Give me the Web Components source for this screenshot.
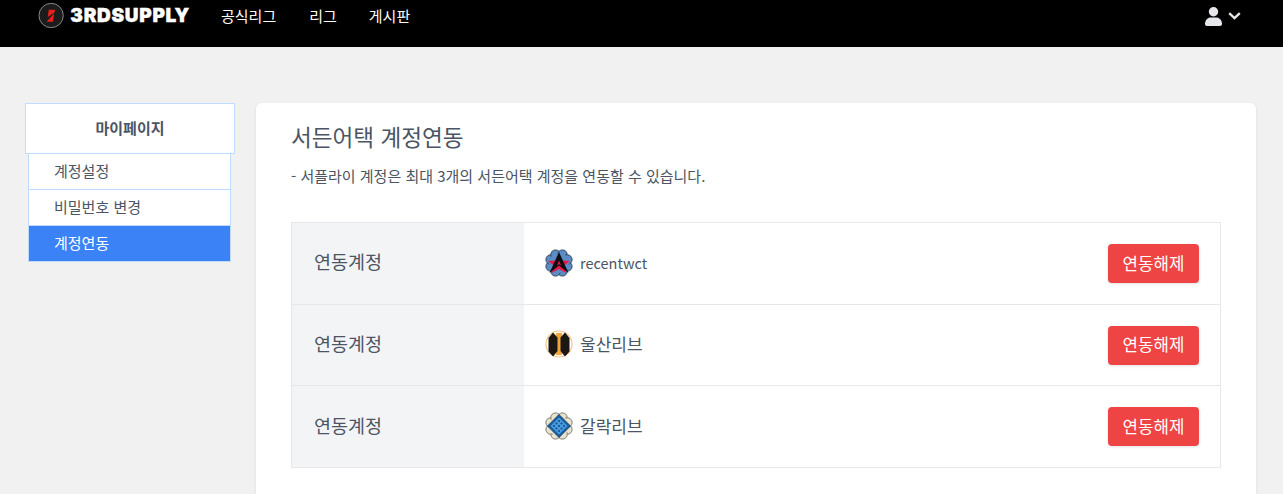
<!DOCTYPE html>
<html lang="ko"><head><meta charset="utf-8"><title>서든어택 계정연동</title>
<style>
html,body{margin:0;padding:0;height:494px;overflow:hidden;background:#f1f1f1;font-family:"Noto Sans CJK KR","Noto Sans",sans-serif;color:#4b5563}
</style></head><body>
<site-header></site-header>
<page-shell>
  <side-menu slot="side" heading="마이페이지">
    <menu-item>계정설정</menu-item>
    <menu-item>비밀번호 변경</menu-item>
    <menu-item active>계정연동</menu-item>
  </side-menu>
  <link-card heading="서든어택 계정연동" note="- 서플라이 계정은 최대 3개의 서든어택 계정을 연동할 수 있습니다.">
    <link-row name="recentwct" icon="a" latin></link-row>
    <link-row name="울산리브" icon="b"></link-row>
    <link-row name="갈락리브" icon="c"></link-row>
  </link-card>
</page-shell>
<script>
const KR='"Noto Sans CJK KR","Noto Sans",sans-serif';
function def(name,html,extra){
  customElements.define(name,class extends HTMLElement{
    constructor(){super();this.attachShadow({mode:'open'}).innerHTML=html;}
    connectedCallback(){extra&&extra.call(this,this.shadowRoot);}
  });
}
def('site-header',`<style>
:host{display:flex;height:47px;background:#000;box-sizing:border-box;padding:0 42px 0 38px;align-items:flex-start;color:#fff;font-family:${KR}}
.logo{display:flex;align-items:center;gap:6px;height:31px;width:152px}
.word{font:900 19px/31px Inter,sans-serif;letter-spacing:.7px;white-space:nowrap;-webkit-text-stroke:.4px #fff}
nav{display:flex;gap:33px;margin-left:31px;font-size:15px;line-height:31px;color:#fdfdf5}
nav span:last-child{margin-left:-1px}
.user{margin-left:auto;display:flex;align-items:center;gap:6px;height:31px}
.user svg:first-child{margin-top:2px}
</style>
<div class="logo"><svg width="27" height="27" viewBox="0 0 27 27"><circle cx="13.500" cy="13.500" r="12.500" fill="#1c1c1c" stroke="#8a8a8a" stroke-width="1"/><path d="M11 7.500h6.500l-.5 3-7 4.500zM16.500 11.500l-1 8.500H8.800z" fill="#e8201c"/></svg><span class="word">3RDSUPPLY</span></div>
<nav><span>공식리그</span><span>리그</span><span>게시판</span></nav>
<div class="user"><svg width="17" height="19" viewBox="0 0 17 19"><circle cx="8.500" cy="4.800" r="4.700" fill="#e5e7eb"/><path d="M0 17c0-4.400 3-6.600 5.500-6.600h6C14 10.400 17 12.600 17 17c0 1.200-.8 2-2 2H2c-1.200 0-2-.8-2-2z" fill="#e5e7eb"/></svg><svg width="13" height="8" viewBox="0 0 13 8"><path d="M1.200 1.200l5.300 5 5.300-5" fill="none" stroke="#e5e7eb" stroke-width="2.300"/></svg></div>`);
def('page-shell',`<style>
:host{display:flex;gap:21px;padding:56px 27px 0 25px;align-items:flex-start}
::slotted([slot=side]){flex:none}
.main{flex:1;min-width:0}
</style><slot name="side"></slot><div class="main"><slot></slot></div>`);
def('side-menu',`<style>
:host{display:block;width:210px;font-family:${KR}}
.t{box-sizing:border-box;height:51px;background:#fff;border:1px solid #bfdbfe;display:flex;align-items:center;justify-content:center;font-size:15px;font-weight:700;color:#4b5563;padding-bottom:2px}
.l{margin:0 4px 0 3px;display:flex;flex-direction:column;border:1px solid #bfdbfe;border-top:0;background:#fff}
</style><div class="t"></div><div class="l"><slot></slot></div>`,function(r){r.querySelector('.t').textContent=this.getAttribute('heading')});
def('menu-item',`<style>
:host{display:block;box-sizing:border-box;height:36px;padding-left:25px;font-size:15px;line-height:33px;color:#4b5563;background:#fff;border-bottom:1px solid #bfdbfe}
:host(:last-child){border-bottom:0;height:35px}
:host([active]){background:#3b82f6;color:#fff}
</style><slot></slot>`);
def('link-card',`<style>
:host{display:block;box-sizing:border-box;height:460px;background:#fff;border-radius:6px;box-shadow:0 1px 3px rgba(0,0,0,.1);padding:19px 35px;font-family:${KR}}
h2{margin:0;font-size:22.600px;font-weight:400;line-height:30px;color:#4b5563}
p{margin:14px 0 0;font-size:15px;line-height:20px;color:#4b5563}
.t{margin-top:36px;border:1px solid #e5e7eb;border-bottom:0}
</style><h2></h2><p></p><div class="t"><slot></slot></div>`,function(r){r.querySelector('h2').textContent=this.getAttribute('heading');r.querySelector('p').textContent=this.getAttribute('note')});
const scallop=(fill,stroke)=>{let s='';for(let i=0;i<8;i++){const a=i*Math.PI/4+Math.PI/8;s+=`<circle cx="${(14+9*Math.cos(a)).toFixed(2)}" cy="${(14+9*Math.sin(a)).toFixed(2)}" r="4.800" fill="${fill}" stroke="${stroke}" stroke-width=".9"/>`;}return s+`<circle cx="14" cy="14" r="10" fill="${fill}"/>`;};
const ICONS={
a:`<svg width="28" height="28" viewBox="0 0 28 28">${scallop('#5b8cc4','#2c3e55')}<path d="M14 5l2.700 6.500 8.300.5-6.300 4.800 2.500 7.200-7.200-4-7.200 4 2.500-7.200L3 12l8.300-.5z" fill="#e8184a"/><path d="M14 3l9.500 21-9.500-7.500L4.500 24z" fill="#0d0d12"/><path d="M14 11.500l2 5-2-1.300-2 1.300z" fill="#e8184a"/></svg>`,
b:`<svg width="28" height="28" viewBox="0 0 28 28"><circle cx="14" cy="14" r="13" fill="#fff" stroke="#f7c583" stroke-width="1.200"/><rect x="11" y="3" width="6" height="22" fill="#efa63a"/><path d="M3.500 8L8 2.500l4.500 5V21L8 26.500l-4.500-5zM15.500 7.500L20 2.500 24.500 8v13.500L20 26.500 15.500 21z" fill="#1b1712"/></svg>`,
c:`<svg width="28" height="28" viewBox="0 0 28 28">${scallop('#e9e2cc','#6f6f68')}<path d="M14 2.500L25.500 14 14 25.500 2.500 14z" fill="#17609f" stroke="#0d3b66" stroke-width=".8"/><path d="M14 5.500l8.500 8.500-8.500 8.500L5.500 14z" fill="#4a9be0"/><g fill="#12508c"><circle cx="14" cy="9" r="1.100"/><circle cx="9" cy="14" r="1.100"/><circle cx="14" cy="14" r="1.100"/><circle cx="19" cy="14" r="1.100"/><circle cx="14" cy="19" r="1.100"/><circle cx="11.500" cy="11.500" r="1.100"/><circle cx="16.500" cy="11.500" r="1.100"/><circle cx="11.500" cy="16.500" r="1.100"/><circle cx="16.500" cy="16.500" r="1.100"/></g></svg>`};
def('link-row',`<style>
:host{display:flex;height:81.670px;box-sizing:border-box;border-bottom:1px solid #e5e7eb;font-family:${KR}}
.k{width:232px;flex:none;background:#f3f4f6;box-sizing:border-box;padding:0 0 4px 22px;display:flex;align-items:center;font-size:18.500px;color:#4b5563}
.v{flex:1;display:flex;align-items:center;padding:0 21px}
.i{display:flex;width:28px;height:28px;flex:none;margin-top:-1px}
.n{margin-left:7px;font-size:17px;color:#4b5563;padding-bottom:2px}
:host([latin]) .n{font-size:14.500px}
button{margin-left:auto;margin-top:.4px;width:91px;height:39px;border:0;border-radius:4px;background:#ef4444;color:#fff;font:400 16.800px ${KR};padding:0 0 2px;box-shadow:0 1px 3px rgba(0,0,0,.12)}
</style><div class="k">연동계정</div><div class="v"><span class="i"></span><span class="n"></span><button>연동해제</button></div>`,function(r){r.querySelector('.n').textContent=this.getAttribute('name');r.querySelector('.i').innerHTML=ICONS[this.getAttribute('icon')]});
</script>
</body></html>
